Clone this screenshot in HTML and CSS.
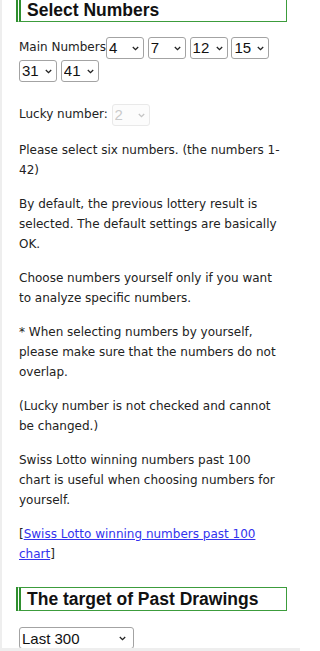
FILE: index.html
```html
<!DOCTYPE html>
<html lang="en">
<head>
<meta charset="utf-8">
<title>Select Numbers</title>
<link rel="stylesheet" href="styles.css">
</head>
<body>
<div class="frame">
  <div class="panel">
    <h2 class="section-title first">Select Numbers</h2>
    <div class="main-numbers">Main Numbers<span class="sel"><select class="num"><option>4</option></select><svg viewBox="0 0 7 5"><path d="M0.8 1 L3.5 3.7 L6.2 1"/></svg></span>
      <span class="sel"><select class="num"><option>7</option></select><svg viewBox="0 0 7 5"><path d="M0.8 1 L3.5 3.7 L6.2 1"/></svg></span>
      <span class="sel"><select class="num"><option>12</option></select><svg viewBox="0 0 7 5"><path d="M0.8 1 L3.5 3.7 L6.2 1"/></svg></span>
      <span class="sel"><select class="num"><option>15</option></select><svg viewBox="0 0 7 5"><path d="M0.8 1 L3.5 3.7 L6.2 1"/></svg></span>
      <span class="sel"><select class="num"><option>31</option></select><svg viewBox="0 0 7 5"><path d="M0.8 1 L3.5 3.7 L6.2 1"/></svg></span>
      <span class="sel"><select class="num"><option>41</option></select><svg viewBox="0 0 7 5"><path d="M0.8 1 L3.5 3.7 L6.2 1"/></svg></span>
    </div>
    <div class="lucky">Lucky number: <span class="sel disabled"><select class="num" disabled><option>2</option></select><svg viewBox="0 0 7 5"><path d="M0.8 1 L3.5 3.7 L6.2 1"/></svg></span></div>
    <p>Please select six numbers. (the numbers 1-42)</p>
    <p>By default, the previous lottery result is selected. The default settings are basically OK.</p>
    <p>Choose numbers yourself only if you want to analyze specific numbers.</p>
    <p>* When selecting numbers by yourself, please make sure that the numbers do not overlap.</p>
    <p>(Lucky number is not checked and cannot be changed.)</p>
    <p>Swiss Lotto winning numbers past 100 chart is useful when choosing numbers for yourself.</p>
    <p>[<a href="#">Swiss Lotto winning numbers past 100 chart</a>]</p>
    <h2 class="section-title">The target of Past Drawings</h2>
    <span class="sel range-wrap"><select class="range"><option>Last 300</option></select><svg viewBox="0 0 7 5"><path d="M0.8 1 L3.5 3.7 L6.2 1"/></svg></span>
  </div>
</div>
</body>
</html>
```
FILE: styles.css
```css
html, body {
  margin: 0;
  padding: 0;
  background: #ffffff;
}
body {
  width: 300px;
  font-family: "DejaVu Sans", Verdana, sans-serif;
  font-size: 12px;
  line-height: 20px;
  color: #222222;
}
.frame {
  padding-left: 2px;
  padding-bottom: 3px;
  background: #eeeeee;
}
.panel {
  box-sizing: border-box;
  width: 298px;
  background: #ffffff;
  height: 648px;
  overflow: hidden;
  padding: 0 13px 0 14px;
}
.section-title {
  font-family: "Liberation Sans", Arial, sans-serif;
  font-weight: bold;
  font-size: 17.5px;
  line-height: 22px;
  color: #111111;
  margin: 23px 0 16px 0;
  padding: 0 0 0 6px;
  border: 1px solid #3c9c3c;
  border-left: 5px double #2f8f2f;
}
.section-title.first {
  margin-top: -2px;
  margin-bottom: 14px;
}
.main-numbers {
  line-height: 23px;
  margin: 0 0 20px 3px;
}
.lucky {
  margin: 0 0 14px 3px;
  line-height: 24px;
}
p {
  margin: 0 4px 14px 3px;
}
a {
  color: #3333ee;
}
.sel {
  position: relative;
  display: inline-block;
  vertical-align: middle;
  line-height: 0;
}
.sel select {
  -webkit-appearance: none;
  appearance: none;
  box-sizing: border-box;
  font-family: "Liberation Sans", Arial, sans-serif;
  font-size: 15px;
  height: 22px;
  margin: 0;
  padding: 0 12px 0 2px;
  color: #111111;
  background: #ffffff;
  border: 1px solid #a3a3a3;
  border-radius: 3px;
  vertical-align: top;
}
.sel svg {
  position: absolute;
  right: 5px;
  top: 9px;
  width: 7px;
  height: 5px;
  fill: none;
  stroke: #222222;
  stroke-width: 1.3;
  pointer-events: none;
}
.sel.disabled select {
  color: #b5b5b5;
  border-color: #e0e0e0;
  background: #fbfbfb;
}
.sel.disabled svg {
  stroke: #c4c4c4;
}
.num {
  width: 38px;
}
.range-wrap {
  margin-left: 3px;
}
.range {
  width: 115px;
}
.range-wrap svg {
  right: 8px;
}
```
